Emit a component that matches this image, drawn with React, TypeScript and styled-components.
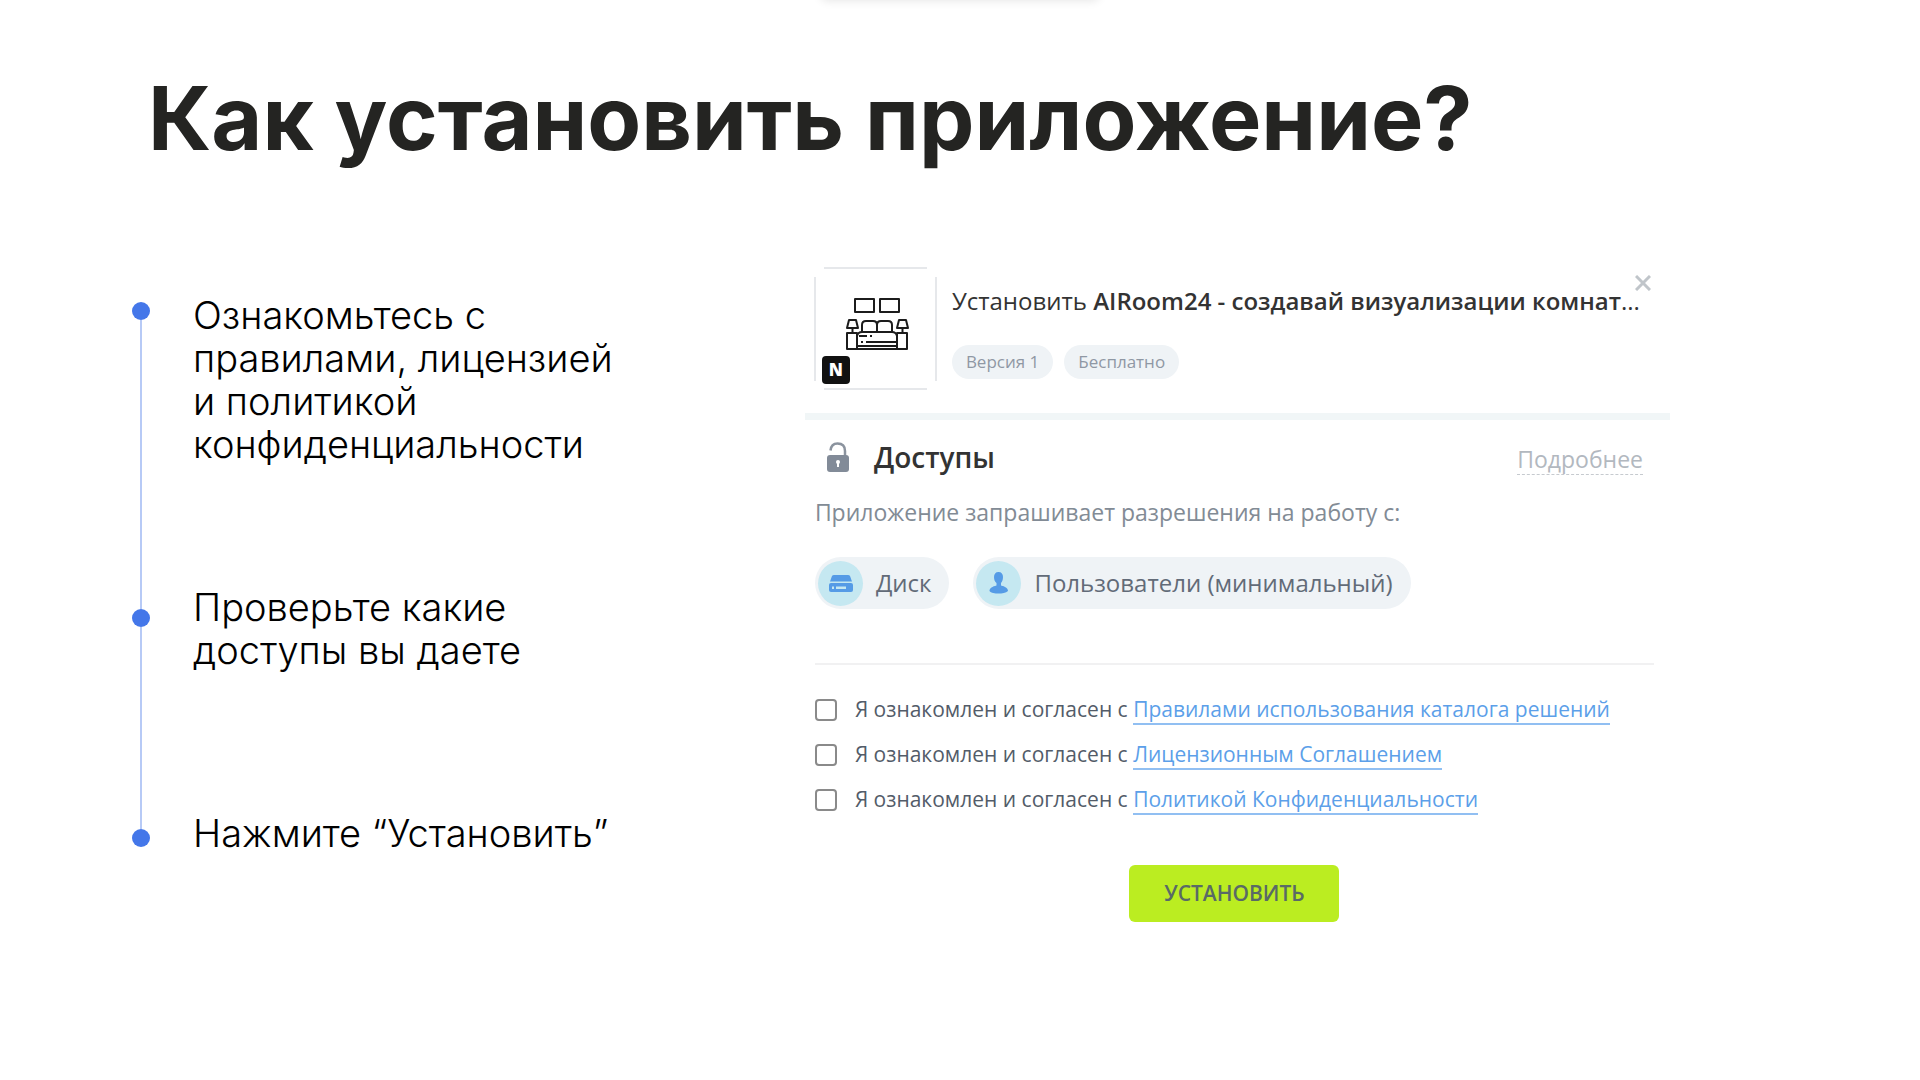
import React from 'react';
import styled, { createGlobalStyle } from 'styled-components';

const GlobalStyle = createGlobalStyle`
  *, *::before, *::after { box-sizing: border-box; }
  body { margin: 0; background: #fff; }
  h1, h2, p, ol, ul { margin: 0; padding: 0; }
  ol, ul { list-style: none; }
`;

const slideFont = '"Century Gothic", Inter, sans-serif';
const panelFont = '"Open Sans", "Noto Sans", sans-serif';

const Slide = styled.main`
  position: relative;
  min-height: 100vh;
  padding: 66px 250px 64px 132px;
  overflow: hidden;
  font-family: ${slideFont};
  color: #000;
`;

const FloatingBar = styled.div`
  position: absolute;
  left: 50%;
  bottom: 100%;
  width: 280px;
  height: 40px;
  transform: translateX(-50%);
  border-radius: 8px;
  background: #fff;
  box-shadow: 0 1px 10px rgba(0, 0, 0, 0.1);
`;

const Title = styled.h1`
  padding-left: 16px;
  font-size: 88px;
  line-height: 104px;
  font-weight: 700;
  color: #242422;
  white-space: nowrap;
`;

const Columns = styled.div`
  display: grid;
  grid-template-columns: 7fr 9fr;
  align-items: start;
  padding-top: 87px;
`;

const Guide = styled.section`
  display: flex;
  gap: 43px;
  padding-top: 37px;
`;

const Rail = styled.div`
  display: flex;
  flex-direction: column;
  align-items: center;
  width: 18px;
  padding: 8px 0;
`;

const Dot = styled.span`
  flex: none;
  width: 18px;
  height: 18px;
  border-radius: 50%;
  background: #4477e9;
`;

const Segment = styled.span<{ $share: number }>`
  flex: ${({ $share }) => $share} 0 0;
  width: 2px;
  background: #b7caf6;
`;

const Steps = styled.ol`
  flex: 1;
  max-width: 440px;
`;

const Step = styled.li<{ $space: number }>`
  margin-top: ${({ $space }) => $space}px;
  font-size: 38px;
  line-height: 43px;
  font-weight: 300;
`;

const Panel = styled.section`
  position: relative;
  font-family: ${panelFont};
  color: #535c69;
`;

const PanelHeader = styled.header`
  display: flex;
  gap: 15px;
  padding: 10px 16px 23px 9px;
  border-bottom: 7px solid #f1f6f7;
`;

const AppIcon = styled.div`
  position: relative;
  flex: none;
  width: 123px;
  height: 123px;
`;

const Badge = styled.span`
  position: absolute;
  left: 8px;
  bottom: 6px;
  width: 28px;
  height: 28px;
  border-radius: 4px;
  background: #111;
  color: #fff;
  font-size: 17px;
  line-height: 28px;
  font-weight: 800;
  text-align: center;
`;

const HeaderText = styled.div`
  min-width: 0;
  padding-top: 18px;
`;

const AppTitle = styled.p`
  font-size: 24px;
  line-height: 32px;
  color: #333;
  white-space: nowrap;
`;

const AppName = styled.b`
  font-weight: 600;
`;

const Tags = styled.ul`
  display: flex;
  gap: 11px;
  margin-top: 28px;
`;

const Tag = styled.li`
  padding: 0 14px;
  border-radius: 17px;
  background: #eff3f6;
  color: #8f98a4;
  font-size: 17px;
  line-height: 34px;
`;

const CloseButton = styled.button`
  position: absolute;
  top: 18px;
  right: 19px;
  display: flex;
  padding: 0;
  border: 0;
  background: none;
  color: #c0c5ca;
  cursor: pointer;
`;

const Access = styled.div`
  padding: 19px 16px 0 10px;
`;

const AccessHead = styled.div`
  display: flex;
  align-items: baseline;
  padding: 0 11px;
`;

const LockIcon = styled.svg`
  align-self: center;
  margin-right: 24px;
`;

const AccessTitle = styled.h2`
  flex: 1;
  font-size: 28px;
  line-height: 36px;
  font-weight: 600;
  color: #333;
`;

const MoreLink = styled.a`
  border-bottom: 1px dashed #c6cacf;
  color: #b2b8bf;
  font-size: 23px;
  line-height: 30px;
  text-decoration: none;
`;

const Note = styled.p`
  margin-top: 21px;
  font-size: 23px;
  line-height: 32px;
  color: #828b95;
`;

const Scopes = styled.ul`
  display: flex;
  gap: 24px;
  margin-top: 29px;
`;

const Scope = styled.li`
  display: flex;
  align-items: center;
  gap: 13px;
  padding: 0 18px 0 3px;
  border-radius: 26px;
  background: #eff3f6;
  color: #626b78;
  font-size: 24px;
  line-height: 52px;
`;

const ScopeIcon = styled.svg`
  flex: none;
  border-radius: 50%;
  background: #c5e8f1;
  fill: #559be6;
`;

const Agreements = styled.ul`
  margin-top: 54px;
  padding-top: 22px;
  border-top: 2px solid #f1f1f2;
`;

const Agreement = styled.li`
  display: flex;
  align-items: center;
  gap: 18px;
  font-size: 21px;
  line-height: 45px;
`;

const Checkbox = styled.input`
  appearance: none;
  flex: none;
  width: 22px;
  height: 22px;
  margin: 0;
  border: 2px solid #8a8a8a;
  border-radius: 4px;
  background: #fff;

  &:checked {
    background: #559be6;
  }
`;

const TermsLink = styled.a`
  border-bottom: 2px solid #91bff2;
  color: #5c9fe9;
  text-decoration: none;
`;

const InstallButton = styled.button`
  display: block;
  width: 210px;
  height: 57px;
  margin: 43px auto 0;
  padding: 0;
  border: 0;
  border-radius: 6px;
  background: #bbed21;
  color: #596a66;
  font-family: inherit;
  font-size: 21px;
  line-height: 57px;
  font-weight: 600;
  cursor: pointer;
`;

const steps = [
  { text: 'Ознакомьтесь с правилами, лицензией и политикой конфиденциальности', space: 0 },
  { text: 'Проверьте какие доступы вы даете', space: 120 },
  { text: 'Нажмите “Установить”', space: 140 },
];

const terms = [
  'Правилами использования каталога решений',
  'Лицензионным Соглашением',
  'Политикой Конфиденциальности',
];

function BedroomDrawing() {
  return (
    <svg width="123" height="123" viewBox="0 0 123 123" fill="none" aria-hidden="true">
      <g stroke="#e6e8eb" strokeWidth="2">
        <path d="M10 1H113M10 122H113" />
        <path d="M1 10V114M122 10V114" />
      </g>
      <g stroke="#1c1c1c" strokeWidth="2" strokeLinejoin="round">
        <rect x="41" y="32" width="19" height="13" />
        <rect x="66" y="32" width="19" height="13" />
        <path d="M35 53H42L44 61H33ZM38.500 61V66M85 53H92L94 61H83ZM88.500 61V66" />
        <rect x="33" y="66" width="10" height="16" />
        <rect x="83" y="66" width="10" height="16" />
        <path d="M48 65V58Q48 54 52 54H59Q63 54 63 58V65M63 58Q63 54 67 54H74Q78 54 78 58V65" />
        <path d="M43 69Q44 65 48 65H78Q82 65 83 69M43 79H83M43 82H83" />
        <path d="M45 69H53M56 69H58M47 75H49M52 75H83" />
      </g>
    </svg>
  );
}

export default function App() {
  return (
    <>
      <GlobalStyle />
      <Slide>
        <FloatingBar />
        <Title>Как установить приложение?</Title>
        <Columns>
          <Guide>
            <Rail aria-hidden="true">
              <Dot />
              <Segment $share={289} />
              <Dot />
              <Segment $share={202} />
              <Dot />
            </Rail>
            <Steps>
              {steps.map((step) => (
                <Step key={step.text} $space={step.space}>
                  {step.text}
                </Step>
              ))}
            </Steps>
          </Guide>

          <Panel>
            <PanelHeader>
              <AppIcon>
                <BedroomDrawing />
                <Badge>N</Badge>
              </AppIcon>
              <HeaderText>
                <AppTitle>
                  Установить <AppName>AIRoom24 - создавай визуализации комнат</AppName>...
                </AppTitle>
                <Tags>
                  <Tag>Версия 1</Tag>
                  <Tag>Бесплатно</Tag>
                </Tags>
              </HeaderText>
            </PanelHeader>
            <CloseButton type="button" aria-label="Закрыть">
              <svg width="16" height="16" viewBox="0 0 16 16" stroke="currentColor" strokeWidth="3">
                <path d="M1 1L15 15M15 1L1 15" />
              </svg>
            </CloseButton>

            <Access>
              <AccessHead>
                <LockIcon width="24" height="30" viewBox="0 0 24 30" aria-hidden="true">
                  <path
                    d="M4.500 8.500C5 4 7.500 1.500 11.500 1.500C16 1.500 19 4 19 9V14"
                    fill="none"
                    stroke="#8b939e"
                    strokeWidth="2.500"
                  />
                  <rect x="1" y="13" width="22" height="17" rx="3" fill="#828b98" />
                  <circle cx="12" cy="20" r="2" fill="#fff" />
                  <rect x="11" y="20" width="2" height="5" fill="#fff" />
                </LockIcon>
                <AccessTitle>Доступы</AccessTitle>
                <MoreLink href="#details">Подробнее</MoreLink>
              </AccessHead>
              <Note>Приложение запрашивает разрешения на работу с:</Note>
              <Scopes>
                <Scope>
                  <ScopeIcon width="45" height="45" viewBox="0 0 45 45" aria-hidden="true">
                    <path d="M16 14H30Q31.500 14 32 15L34 20.500H12L14 15Q14.500 14 16 14Z" />
                    <rect x="11" y="22" width="24" height="9" rx="2" />
                    <path d="M14 25.500H16V28H14ZM18 25.500H28V28H18Z" fill="#c5e8f1" />
                  </ScopeIcon>
                  Диск
                </Scope>
                <Scope>
                  <ScopeIcon width="45" height="45" viewBox="0 0 45 45" aria-hidden="true">
                    <path d="M22.500 11C25.500 11 27 13 27 16C27 19 26 21 25 22V24.500C29 25.500 32 27 32 30C30 32 26 32.500 22.500 32.500C19 32.500 15 32 13.500 30C13.500 27 16.500 25.500 20.500 24.500V22C19 21 18 19 18 16C18 13 19.500 11 22.500 11Z" />
                  </ScopeIcon>
                  Пользователи (минимальный)
                </Scope>
              </Scopes>
              <Agreements>
                {terms.map((term, i) => (
                  <Agreement key={term}>
                    <Checkbox type="checkbox" id={`term-${i}`} />
                    <label htmlFor={`term-${i}`}>
                      Я ознакомлен и согласен с <TermsLink href={`#terms-${i}`}>{term}</TermsLink>
                    </label>
                  </Agreement>
                ))}
              </Agreements>
              <InstallButton type="button">УСТАНОВИТЬ</InstallButton>
            </Access>
          </Panel>
        </Columns>
      </Slide>
    </>
  );
}
